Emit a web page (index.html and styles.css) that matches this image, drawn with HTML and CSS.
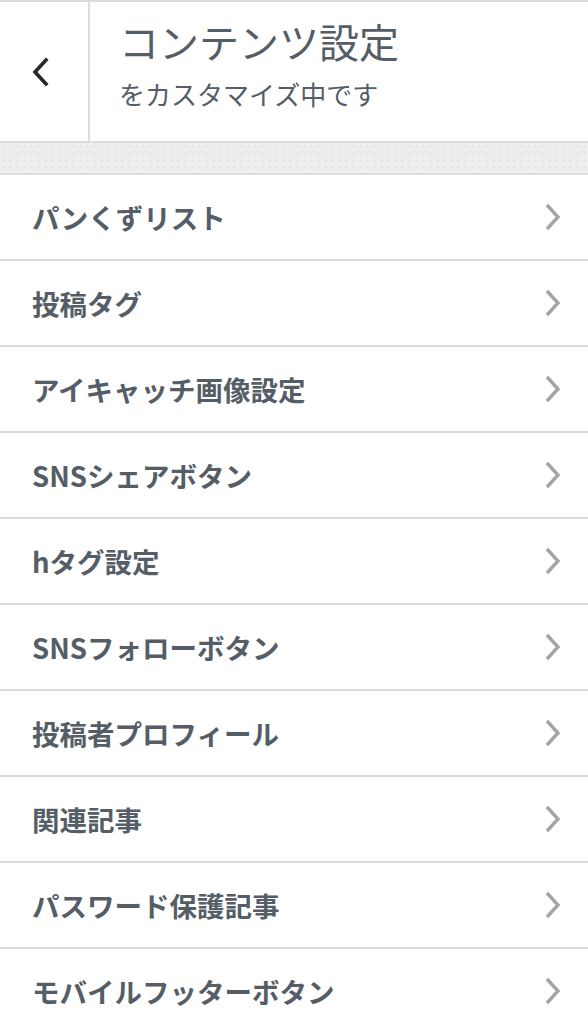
FILE: index.html
```html
<!DOCTYPE html>
<html lang="ja">
<head>
    <meta charset="UTF-8">
    <meta name="viewport" content="width=device-width, initial-scale=1.0">
    <title>コンテンツ設定</title>
    <link rel="stylesheet" href="styles.css">
</head>
<body>
    <div class="panel-header">
        <button class="back-btn" aria-label="戻る">
            <svg width="18" height="30" viewBox="0 0 18 30"><path d="M15 3 L4 15 L15 27" fill="none" stroke="#23282d" stroke-width="3.6" stroke-linecap="square"/></svg>
        </button>
        <div class="panel-title">
            <h2>コンテンツ設定</h2>
            <p>をカスタマイズ中です</p>
        </div>
    </div>

    <div class="panel-gap"></div>

    <ul class="section-list">
        <li class="section-item"><span>パンくずリスト</span><svg class="chev" width="18" height="28" viewBox="0 0 18 28"><path d="M3 2 L14 14 L3 26" fill="none" stroke="#a0a5aa" stroke-width="3.4"/></svg></li>
        <li class="section-item"><span>投稿タグ</span><svg class="chev" width="18" height="28" viewBox="0 0 18 28"><path d="M3 2 L14 14 L3 26" fill="none" stroke="#a0a5aa" stroke-width="3.4"/></svg></li>
        <li class="section-item"><span>アイキャッチ画像設定</span><svg class="chev" width="18" height="28" viewBox="0 0 18 28"><path d="M3 2 L14 14 L3 26" fill="none" stroke="#a0a5aa" stroke-width="3.4"/></svg></li>
        <li class="section-item"><span>SNSシェアボタン</span><svg class="chev" width="18" height="28" viewBox="0 0 18 28"><path d="M3 2 L14 14 L3 26" fill="none" stroke="#a0a5aa" stroke-width="3.4"/></svg></li>
        <li class="section-item"><span>hタグ設定</span><svg class="chev" width="18" height="28" viewBox="0 0 18 28"><path d="M3 2 L14 14 L3 26" fill="none" stroke="#a0a5aa" stroke-width="3.4"/></svg></li>
        <li class="section-item"><span>SNSフォローボタン</span><svg class="chev" width="18" height="28" viewBox="0 0 18 28"><path d="M3 2 L14 14 L3 26" fill="none" stroke="#a0a5aa" stroke-width="3.4"/></svg></li>
        <li class="section-item"><span>投稿者プロフィール</span><svg class="chev" width="18" height="28" viewBox="0 0 18 28"><path d="M3 2 L14 14 L3 26" fill="none" stroke="#a0a5aa" stroke-width="3.4"/></svg></li>
        <li class="section-item"><span>関連記事</span><svg class="chev" width="18" height="28" viewBox="0 0 18 28"><path d="M3 2 L14 14 L3 26" fill="none" stroke="#a0a5aa" stroke-width="3.4"/></svg></li>
        <li class="section-item"><span>パスワード保護記事</span><svg class="chev" width="18" height="28" viewBox="0 0 18 28"><path d="M3 2 L14 14 L3 26" fill="none" stroke="#a0a5aa" stroke-width="3.4"/></svg></li>
        <li class="section-item"><span>モバイルフッターボタン</span><svg class="chev" width="18" height="28" viewBox="0 0 18 28"><path d="M3 2 L14 14 L3 26" fill="none" stroke="#a0a5aa" stroke-width="3.4"/></svg></li>
    </ul>
</body>
</html>
```

FILE: styles.css
```css
* { margin: 0; padding: 0; box-sizing: border-box; }
body { font-family: "Noto Sans CJK JP", "Noto Sans", sans-serif; background: #fff; color: #555d66; }
.panel-header { display: flex; height: 143px; border-top: 2px solid #ddd; border-bottom: 2px solid #ddd; background: #fff; }
.back-btn { width: 90px; flex: none; border: none; border-right: 2px solid #ddd; background: #fff; display: flex; align-items: center; justify-content: center; padding-right: 8px; cursor: pointer; }
.panel-title { padding: 12px 0 0 29px; }
.panel-title h2 { font-size: 40px; font-weight: 400; line-height: 54px; color: #555d66; }
.panel-title p { font-size: 26px; line-height: 40px; margin-top: 6px; color: #555d66; }
.panel-gap { height: 32px; background-color: #eee; background-image: radial-gradient(#e3e3e3 1px, transparent 1.2px); background-size: 7px 7px; border-bottom: 2px solid #ddd; }
.section-list { list-style: none; }
.section-item { display: flex; align-items: center; justify-content: space-between; height: 86px; padding: 0 26px 0 32px; border-bottom: 2px solid #ddd; font-size: 27.5px; font-weight: 700; color: #555d66; cursor: pointer; }
.section-item .chev { flex: none; }
```
